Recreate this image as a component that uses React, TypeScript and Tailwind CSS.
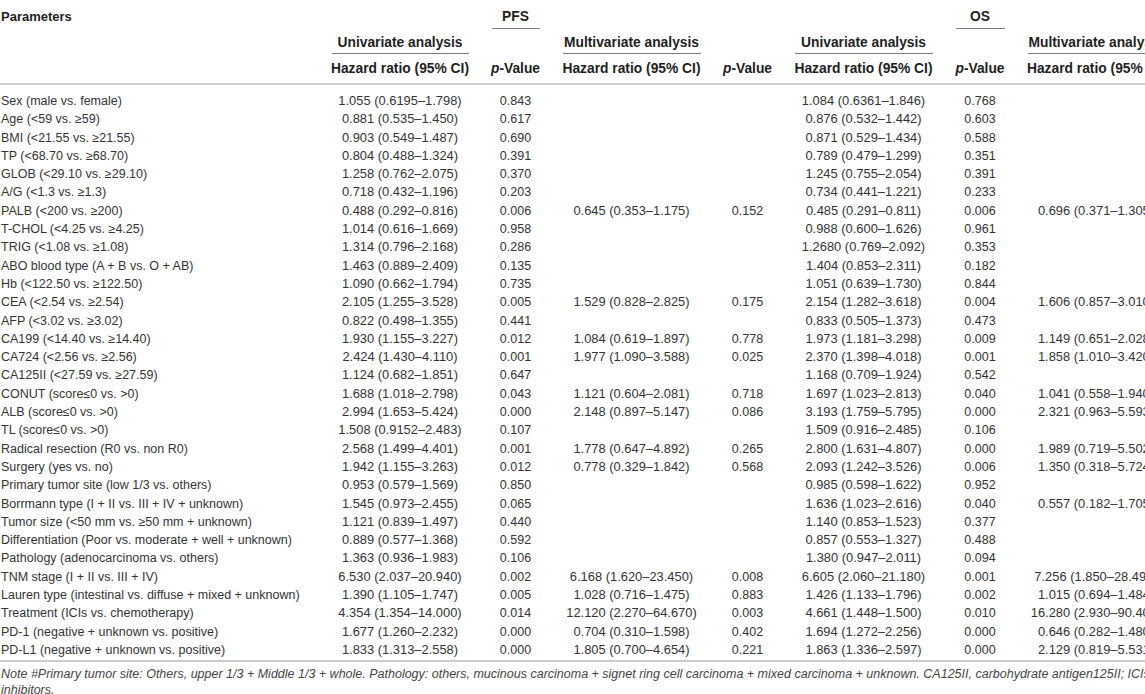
import React from "react";

type Row = [string, string, string, string, string, string, string, string, string];

const rows: Row[] = [
  ["Sex (male vs. female)", "1.055 (0.6195–1.798)", "0.843", "", "", "1.084 (0.6361–1.846)", "0.768", "", ""],
  ["Age (<59 vs. ≥59)", "0.881 (0.535–1.450)", "0.617", "", "", "0.876 (0.532–1.442)", "0.603", "", ""],
  ["BMI (<21.55 vs. ≥21.55)", "0.903 (0.549–1.487)", "0.690", "", "", "0.871 (0.529–1.434)", "0.588", "", ""],
  ["TP (<68.70 vs. ≥68.70)", "0.804 (0.488–1.324)", "0.391", "", "", "0.789 (0.479–1.299)", "0.351", "", ""],
  ["GLOB (<29.10 vs. ≥29.10)", "1.258 (0.762–2.075)", "0.370", "", "", "1.245 (0.755–2.054)", "0.391", "", ""],
  ["A/G (<1.3 vs. ≥1.3)", "0.718 (0.432–1.196)", "0.203", "", "", "0.734 (0.441–1.221)", "0.233", "", ""],
  ["PALB (<200 vs. ≥200)", "0.488 (0.292–0.816)", "0.006", "0.645 (0.353–1.175)", "0.152", "0.485 (0.291–0.811)", "0.006", "0.696 (0.371–1.305)", ""],
  ["T-CHOL (<4.25 vs. ≥4.25)", "1.014 (0.616–1.669)", "0.958", "", "", "0.988 (0.600–1.626)", "0.961", "", ""],
  ["TRIG (<1.08 vs. ≥1.08)", "1.314 (0.796–2.168)", "0.286", "", "", "1.2680 (0.769–2.092)", "0.353", "", ""],
  ["ABO blood type (A + B vs. O + AB)", "1.463 (0.889–2.409)", "0.135", "", "", "1.404 (0.853–2.311)", "0.182", "", ""],
  ["Hb (<122.50 vs. ≥122.50)", "1.090 (0.662–1.794)", "0.735", "", "", "1.051 (0.639–1.730)", "0.844", "", ""],
  ["CEA (<2.54 vs. ≥2.54)", "2.105 (1.255–3.528)", "0.005", "1.529 (0.828–2.825)", "0.175", "2.154 (1.282–3.618)", "0.004", "1.606 (0.857–3.010)", ""],
  ["AFP (<3.02 vs. ≥3.02)", "0.822 (0.498–1.355)", "0.441", "", "", "0.833 (0.505–1.373)", "0.473", "", ""],
  ["CA199 (<14.40 vs. ≥14.40)", "1.930 (1.155–3.227)", "0.012", "1.084 (0.619–1.897)", "0.778", "1.973 (1.181–3.298)", "0.009", "1.149 (0.651–2.028)", ""],
  ["CA724 (<2.56 vs. ≥2.56)", "2.424 (1.430–4.110)", "0.001", "1.977 (1.090–3.588)", "0.025", "2.370 (1.398–4.018)", "0.001", "1.858 (1.010–3.420)", ""],
  ["CA125II (<27.59 vs. ≥27.59)", "1.124 (0.682–1.851)", "0.647", "", "", "1.168 (0.709–1.924)", "0.542", "", ""],
  ["CONUT (score≤0 vs. >0)", "1.688 (1.018–2.798)", "0.043", "1.121 (0.604–2.081)", "0.718", "1.697 (1.023–2.813)", "0.040", "1.041 (0.558–1.940)", ""],
  ["ALB (score≤0 vs. >0)", "2.994 (1.653–5.424)", "0.000", "2.148 (0.897–5.147)", "0.086", "3.193 (1.759–5.795)", "0.000", "2.321 (0.963–5.593)", ""],
  ["TL (score≤0 vs. >0)", "1.508 (0.9152–2.483)", "0.107", "", "", "1.509 (0.916–2.485)", "0.106", "", ""],
  ["Radical resection (R0 vs. non R0)", "2.568 (1.499–4.401)", "0.001", "1.778 (0.647–4.892)", "0.265", "2.800 (1.631–4.807)", "0.000", "1.989 (0.719–5.502)", ""],
  ["Surgery (yes vs. no)", "1.942 (1.155–3.263)", "0.012", "0.778 (0.329–1.842)", "0.568", "2.093 (1.242–3.526)", "0.006", "1.350 (0.318–5.724)", ""],
  ["Primary tumor site (low 1/3 vs. others)", "0.953 (0.579–1.569)", "0.850", "", "", "0.985 (0.598–1.622)", "0.952", "", ""],
  ["Borrmann type (I + II vs. III + IV + unknown)", "1.545 (0.973–2.455)", "0.065", "", "", "1.636 (1.023–2.616)", "0.040", "0.557 (0.182–1.705)", ""],
  ["Tumor size (<50 mm vs. ≥50 mm + unknown)", "1.121 (0.839–1.497)", "0.440", "", "", "1.140 (0.853–1.523)", "0.377", "", ""],
  ["Differentiation (Poor vs. moderate + well + unknown)", "0.889 (0.577–1.368)", "0.592", "", "", "0.857 (0.553–1.327)", "0.488", "", ""],
  ["Pathology (adenocarcinoma vs. others)", "1.363 (0.936–1.983)", "0.106", "", "", "1.380 (0.947–2.011)", "0.094", "", ""],
  ["TNM stage (I + II vs. III + IV)", "6.530 (2.037–20.940)", "0.002", "6.168 (1.620–23.450)", "0.008", "6.605 (2.060–21.180)", "0.001", "7.256 (1.850–28.490)", ""],
  ["Lauren type (intestinal vs. diffuse + mixed + unknown)", "1.390 (1.105–1.747)", "0.005", "1.028 (0.716–1.475)", "0.883", "1.426 (1.133–1.796)", "0.002", "1.015 (0.694–1.484)", ""],
  ["Treatment (ICIs vs. chemotherapy)", "4.354 (1.354–14.000)", "0.014", "12.120 (2.270–64.670)", "0.003", "4.661 (1.448–1.500)", "0.010", "16.280 (2.930–90.400)", ""],
  ["PD-1 (negative + unknown vs. positive)", "1.677 (1.260–2.232)", "0.000", "0.704 (0.310–1.598)", "0.402", "1.694 (1.272–2.256)", "0.000", "0.646 (0.282–1.480)", ""],
  ["PD-L1 (negative + unknown vs. positive)", "1.833 (1.313–2.558)", "0.000", "1.805 (0.700–4.654)", "0.221", "1.863 (1.336–2.597)", "0.000", "2.129 (0.819–5.531)", ""],
];

const GRID =
  "grid grid-cols-[320px_160px_71px_161px_71px_161px_72px_160px_71px]";

function PVal() {
  return (
    <span>
      <span className="italic">p</span>-Value
    </span>
  );
}

function GroupHead({ children }: { children: React.ReactNode }) {
  return (
    <div className="px-[11.5px]">
      <div className="pt-[4.5px] pb-[3px] leading-[15px] text-center border-b-[1.5px] border-[#7a7a7a] whitespace-nowrap">
        {children}
      </div>
    </div>
  );
}

function TopHead({ children }: { children: React.ReactNode }) {
  return (
    <div className="px-[11.5px]">
      <div className="pt-[9px] pb-[4px] leading-[15px] text-center border-b-[1.5px] border-[#7a7a7a]">
        {children}
      </div>
    </div>
  );
}

function ColHead({ children }: { children: React.ReactNode }) {
  return (
    <div className="pt-[5.5px] leading-[15px] text-center whitespace-nowrap">{children}</div>
  );
}

export default function App() {
  return (
    <div
      className="w-[1145px] h-[694px] overflow-hidden bg-white"
      style={{ fontFamily: '"Liberation Sans", Arial, Helvetica, sans-serif' }}
    >
      <div className="w-[1270px] text-[12.5px]">
        {/* Header */}
        <div className="w-[1247px] border-b-2 border-[#cccccc] font-bold text-[13.8px] text-[#1e1e1e]">
          {/* Row 1 */}
          <div className={`${GRID} h-[30px]`}>
            <div className="pl-[1px] pt-[9px] leading-[15px] text-[13px]">Parameters</div>
            <div />
            <TopHead>PFS</TopHead>
            <div />
            <div />
            <div />
            <TopHead>OS</TopHead>
            <div />
            <div />
          </div>
          {/* Row 2 */}
          <div className={`${GRID} h-[25px]`}>
            <div />
            <GroupHead>Univariate analysis</GroupHead>
            <div />
            <GroupHead>Multivariate analysis</GroupHead>
            <div />
            <GroupHead>Univariate analysis</GroupHead>
            <div />
            <GroupHead>Multivariate analysis</GroupHead>
            <div />
          </div>
          {/* Row 3 */}
          <div className={`${GRID} h-[28px]`}>
            <div />
            <ColHead>Hazard ratio (95% CI)</ColHead>
            <ColHead><PVal /></ColHead>
            <ColHead>Hazard ratio (95% CI)</ColHead>
            <ColHead><PVal /></ColHead>
            <ColHead>Hazard ratio (95% CI)</ColHead>
            <ColHead><PVal /></ColHead>
            <ColHead>Hazard ratio (95% CI)</ColHead>
            <ColHead><PVal /></ColHead>
          </div>
        </div>

        {/* Body */}
        <div className="w-[1247px] pt-[7px] pb-[1px] border-b-2 border-[#cccccc] text-[#333333]">
          {rows.map((r, i) => (
            <div key={i} className={`${GRID} h-[18.3px] leading-[18.3px]`}>
              <div className="pl-[1px] whitespace-nowrap">{r[0]}</div>
              {r.slice(1).map((c, j) => (
                <div
                  key={j}
                  className={
                    j % 2 === 0
                      ? "text-center whitespace-nowrap text-[12.9px]"
                      : "text-center whitespace-nowrap"
                  }
                >
                  {c}
                </div>
              ))}
            </div>
          ))}
        </div>

        {/* Note */}
        <div className="pt-[4px] pl-[1px] italic leading-[16px] text-[12.5px] text-[#444444]">
          Note #Primary tumor site: Others, upper 1/3 + Middle 1/3 + whole. Pathology: others, mucinous
          carcinoma + signet ring cell carcinoma + mixed carcinoma + unknown. CA125II, carbohydrate
          antigen125II; ICIs, immune checkpoint inhibitors.
        </div>
      </div>
    </div>
  );
}
